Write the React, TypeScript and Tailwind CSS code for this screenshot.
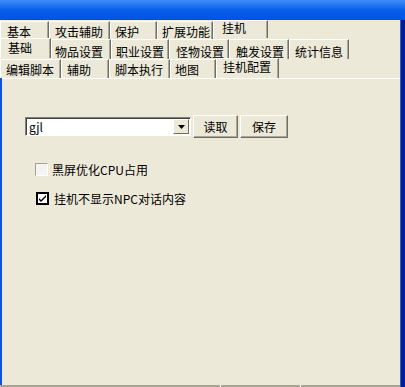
import React from 'react'

interface TabProps {
  label: string,
  className: string,
  selected?: boolean,
}

const Tab = ({label, className, selected}: TabProps) => {
  return (
    <div className={`h-full shrink-0 border-t border-l border-white border-r border-r-[#716F64] shadow-[inset_-1px_0_0_#ACA899] whitespace-nowrap leading-[12px] ${selected ? 'mt-0' : 'mt-[1px]'} ${className}`}>
      {label}
    </div>
  )
}

const RaisedButton = ({label, className}: {label: string, className: string}) => (
  <div className={`flex items-center justify-center h-[23px] border border-t-white border-l-white border-b-[#716F64] border-r-[#716F64] shadow-[inset_-1px_-1px_0_#ACA899] leading-[12px] ${className}`}>
    {label}
  </div>
)

export default function App() {
  return (
    <div className="w-[405px] h-[387px] flex flex-col bg-[#ECE9D8] text-black text-[12px] font-['Noto_Sans_CJK_SC',sans-serif] overflow-hidden">
      {/* title bar */}
      <div className="h-[20px] shrink-0 bg-gradient-to-b from-[#3D8EF8] via-[#0A5DEB] to-[#0053E4]"></div>

      <div className="flex flex-1 min-h-0">
        <div className="flex flex-col flex-1 min-w-0">
          {/* tab rows */}
          <div className="flex h-[18px] shrink-0">
            <Tab label="基本" className="w-[49px] pl-[6px] pt-[4px]" />
            <Tab label="攻击辅助" className="w-[61px] pl-[5px] pt-[4px]" />
            <Tab label="保护" className="w-[47px] pl-[4px] pt-[4px]" />
            <Tab label="扩展功能" className="w-[56px] pl-[4px] pt-[4px]" />
            <Tab label="挂机" selected className="w-[55px] pl-[8px] pt-[1px]" />
          </div>
          <div className="flex h-[20px] shrink-0">
            <Tab label="基础" selected className="w-[51px] pl-[7px] pt-[3px]" />
            <Tab label="物品设置" className="w-[60px] pl-[3px] pt-[6px]" />
            <Tab label="职业设置" className="w-[58px] pl-[4px] pt-[6px]" />
            <Tab label="怪物设置" className="w-[60px] pl-[6px] pt-[6px]" />
            <Tab label="触发设置" className="w-[60px] pl-[6px] pt-[6px]" />
            <Tab label="统计信息" className="w-[60px] pl-[5px] pt-[6px]" />
          </div>
          <div className="flex h-[20px] shrink-0">
            <Tab label="编辑脚本" className="w-[61px] pl-[5px] pt-[4px]" />
            <Tab label="辅助" className="w-[48px] pl-[5px] pt-[4px]" />
            <Tab label="脚本执行" className="w-[61px] pl-[5px] pt-[4px]" />
            <Tab label="地图" className="w-[46px] pl-[4px] pt-[4px]" />
            <Tab label="挂机配置" selected className="w-[63px] pl-[6px] pt-[2px]" />
          </div>

          {/* panel */}
          <div className="flex flex-1 min-h-0">
            <div className="w-[2px] bg-[#0A55E0]"></div>
            <div className="flex-1 border-t border-white pt-[36px] pl-[23px]">
              <div className="flex items-center">
                <div className="flex w-[166px] h-[19px] border border-t-[#808080] border-l-[#808080] border-b-white border-r-white shadow-[inset_1px_1px_0_#404040] bg-white">
                  <div className="flex-1 pl-[3px] pt-[3px] leading-[12px]">gjl</div>
                  <div className="flex items-center justify-center w-[16px] h-[15px] mt-[1px] mr-[1px] border border-t-white border-l-white border-b-[#716F64] border-r-[#716F64] bg-[#ECE9D8]">
                    <svg width="7" height="4" viewBox="0 0 7 4"><path d="M0 0h7L3.5 4z" fill="#000" /></svg>
                  </div>
                </div>
                <RaisedButton label="读取" className="w-[45px] ml-[2px]" />
                <RaisedButton label="保存" className="w-[48px] ml-[2px]" />
              </div>

              <div className="flex items-center mt-[25px] pl-[10px]">
                <div className="w-[13px] h-[13px] border border-t-[#A0A0A0] border-l-[#A0A0A0] border-b-white border-r-white bg-[#F5F4EE]"></div>
                <span className="ml-[4px] leading-[12px]">黑屏优化CPU占用</span>
              </div>

              <div className="flex items-center mt-[16px] pl-[11px]">
                <div className="flex items-center justify-center w-[13px] h-[13px] border-2 border-black bg-white">
                  <svg width="7" height="7" viewBox="0 0 7 7"><path d="M0 3l2 2 5-5v2l-5 5-2-2z" fill="#000" /></svg>
                </div>
                <span className="ml-[5px] leading-[12px]">挂机不显示NPC对话内容</span>
              </div>
            </div>
          </div>

          {/* bottom edge */}
          <div className="flex h-[2px] shrink-0">
            <div className="w-[220px] bg-[#A8A594]"></div>
            <div className="w-[1px] bg-white"></div>
            <div className="w-[79px] bg-[#A8A594]"></div>
            <div className="w-[1px] bg-white"></div>
            <div className="flex-1 bg-[#A8A594]"></div>
          </div>
        </div>

        {/* right window border */}
        <div className="w-[5px] shrink-0 border-l border-[#2A5CD8] bg-[#001C96]"></div>
      </div>
    </div>
  )
}
